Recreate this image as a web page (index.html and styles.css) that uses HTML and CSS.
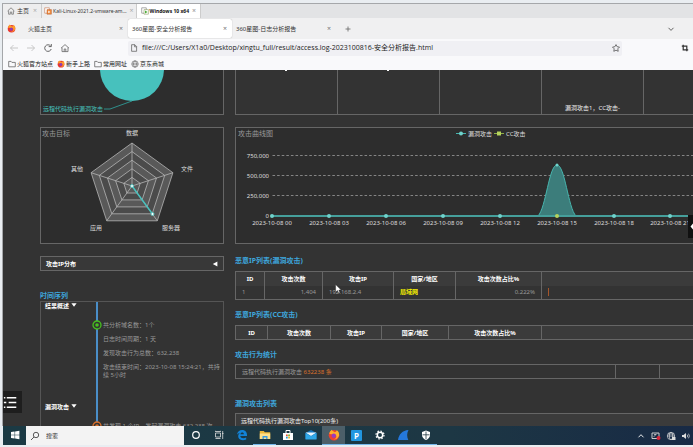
FILE: index.html
```html
<!DOCTYPE html>
<html lang="zh-CN">
<head>
<meta charset="utf-8">
<title>360星图-安全分析报告</title>
<link rel="stylesheet" href="styles.css">
</head>
<body>
<div class="window">
  <nav class="vm-tabs" aria-label="虚拟机">
    <button class="vm-tab vm-home"><svg class="icon-s" viewBox="0 0 8 8"><path d="M.6 4 4 .8 7.4 4M1.6 3.6v3.6h1.7V5h1.4v2.2h1.7V3.6" fill="none" stroke="#777" stroke-width=".8"/></svg>主页<span class="close">×</span></button>
    <button class="vm-tab"><svg class="icon-s" viewBox="0 0 8 8"><path d="M.7.8h4.6v5.4H.7z" fill="#fff" stroke="#c98a6a" stroke-width=".7"/><path d="M3 2.6h4.4v4.6H3z" fill="#f08a3c" stroke="#b85a28" stroke-width=".5"/><path d="m4.3 3.6 2 1.3-2 1.3z" fill="#fff"/></svg>Kali-Linux-2021.2-vmware-am...<span class="close">×</span></button>
    <button class="vm-tab vm-current"><svg class="icon-s" viewBox="0 0 8 8"><path d="M.7.8h4.6v5.4H.7z" fill="#fff" stroke="#888" stroke-width=".7"/><path d="M3 2.6h4.4v4.6H3z" fill="#fff" stroke="#7a8a4a" stroke-width=".5"/><path d="m4 3.4 2.6 1.5L4 6.4z" fill="#4fae3c"/></svg>Windows 10 x64<span class="close">×</span></button>
  </nav>

  <nav class="tabs" aria-label="标签页">
    <button class="tab"><svg class="fox" viewBox="0 0 10 10"><circle cx="5" cy="5.2" r="4.2" fill="#e8382f"/><path d="M1.2 4.2C1 2 2.6 1.4 3 .6c.6 1.2 2 1.3 2.6 2.1C7 2.4 7.4 1.4 7.2.8c1.8 1.3 2.4 3.2 1.9 5C8 8 6 9 4.4 8.7 7 8.3 7.6 6 6.4 4.7z" fill="#ff9a2b"/><circle cx="4.8" cy="5.6" r="1.8" fill="#8e3bb5"/></svg><span class="tab-name">火狐主页</span><span class="close">×</span></button>
    <button class="tab tab-current"><span class="tab-name">360星图-安全分析报告</span><span class="close">×</span></button>
    <button class="tab"><span class="tab-name">360星图-日志分析报告</span><span class="close">×</span></button>
    <button class="tab-new" aria-label="新标签"><svg class="icon-s" viewBox="0 0 8 8"><path d="M4 1.5v5M1.5 4h5" stroke="#666" stroke-width=".8"/></svg></button>
    <button class="tab-list" aria-label="标签列表"><svg class="icon-s" viewBox="0 0 8 8"><path d="m1.5 2.8 2.5 2.6 2.5-2.6" fill="none" stroke="#555" stroke-width=".9"/></svg></button>
  </nav>

  <div class="toolbar">
    <button aria-label="后退"><svg class="icon" viewBox="0 0 10 10"><path d="M9 5H1.5M4.5 2l-3 3 3 3" fill="none" stroke="#bbb" stroke-width=".8"/></svg></button>
    <button aria-label="前进"><svg class="icon" viewBox="0 0 10 10"><path d="M1 5h7.5M5.5 2l3 3-3 3" fill="none" stroke="#bbb" stroke-width=".8"/></svg></button>
    <button aria-label="刷新"><svg class="icon" viewBox="0 0 10 10"><path d="M8.2 6A3.3 3.3 0 1 1 7.6 3M8.3 1v2.6H5.7" fill="none" stroke="#555" stroke-width=".9"/></svg></button>
    <button aria-label="主页"><svg class="icon" viewBox="0 0 10 10"><path d="M1 5.2 5 1.6l4 3.6M2 4.6v4h6v-4M4.2 8.6V6h1.6v2.6" fill="none" stroke="#666" stroke-width=".8"/></svg></button>
    <label class="address"><svg class="icon-s" viewBox="0 0 8 8"><path d="M1.6.7h3.2l1.8 1.8v4.8h-5zM4.6.8v2h2" fill="none" stroke="#555" stroke-width=".7"/></svg><input type="text" aria-label="地址" value="file:///C:/Users/X1a0/Desktop/xingtu_full/result/access.log-2023100816-安全分析报告.html"><svg class="icon-s" viewBox="0 0 8 8"><path d="m4 .6 1.1 2.1 2.4.4-1.7 1.7.4 2.5L4 6.2 1.8 7.3l.4-2.5L.5 3.1l2.4-.4z" fill="none" stroke="#555" stroke-width=".8"/></svg></label>
    <button class="crop" aria-label="截图"><svg class="icon-s" viewBox="0 0 8 8"><path d="M2.2.8v5h5M.8 2.2h5v5" fill="none" stroke="#333" stroke-width="1.2"/></svg></button>
  </div>

  <nav class="bookmarks" aria-label="书签">
    <a href="#"><svg class="icon-s" viewBox="0 0 8 8"><path d="M.7 1.4h2.4l.8 1h3.4v4.4H.7z" fill="none" stroke="#555" stroke-width=".7"/></svg>火狐官方站点</a>
    <a href="#"><svg class="icon-s" viewBox="0 0 10 10"><circle cx="5" cy="5.2" r="4.2" fill="#e8382f"/><path d="M1.2 4.2C1 2 2.6 1.4 3 .6c.6 1.2 2 1.3 2.6 2.1C7 2.4 7.4 1.4 7.2.8c1.8 1.3 2.4 3.2 1.9 5C8 8 6 9 4.4 8.7 7 8.3 7.6 6 6.4 4.7z" fill="#ff9a2b"/><circle cx="4.8" cy="5.6" r="1.8" fill="#8e3bb5"/></svg>新手上路</a>
    <a href="#"><svg class="icon-s" viewBox="0 0 8 8"><path d="M.7 1.4h2.4l.8 1h3.4v4.4H.7z" fill="none" stroke="#555" stroke-width=".7"/></svg>常用网址</a>
    <a href="#"><svg class="icon-s" viewBox="0 0 8 8"><g fill="none" stroke="#555" stroke-width=".6"><circle cx="4" cy="4" r="3.2"/><ellipse cx="4" cy="4" rx="1.4" ry="3.2"/><path d="M.8 4h6.4"/></g></svg>京东商城</a>
  </nav>

  <main class="report">
    <div class="side">
      <section class="panel pie">
        <svg class="chart" height="44"><circle cx="91" cy="-1" r="32" fill="#47c1bd"/><path d="M91 31 69 39h-6" fill="none" stroke="#2f8f8b"/><text x="2" y="41" class="teal">远程代码执行漏洞攻击</text></svg>
      </section>
      <section class="panel">
        <svg class="chart" height="115">
          <text x="1" y="8" class="caption">攻击目标</text>
          <g transform="translate(91 58)" stroke="#b5b5b5" stroke-width=".8">
            <path d="M0-43 40.9-13.3 25.3 34.8h-50.6L-40.9-13.3z" fill="#595959"/>
            <path d="M0-34.4 32.7-10.6 20.2 27.8h-40.4L-32.7-10.6z" fill="#4b4b4b"/>
            <path d="M0-25.8 24.5-8 15.2 20.9h-30.4L-24.5-8z" fill="#595959"/>
            <path d="M0-17.2 16.4-5.3 10.1 13.9h-20.2L-16.4-5.3z" fill="#4b4b4b"/>
            <path d="M0-8.6 8.2-2.7 5.1 7H-5.1L-8.2-2.7z" fill="#595959"/>
            <path d="M0 0V-43M0 0 40.9-13.3M0 0 25.3 34.8M0 0-25.3 34.8M0 0-40.9-13.3" fill="none"/>
            <path d="m0 0 20.5 28" stroke="#47c1bd" stroke-width="1.4"/>
            <circle r="1.5" fill="#fff" stroke="#47c1bd"/><circle cx="20.5" cy="28" r="1.5" fill="#fff" stroke="#47c1bd"/>
          </g>
          <g class="label mid"><text x="91" y="7">数据</text><text x="146" y="43">文件</text><text x="130" y="102">服务器</text><text x="55" y="102">应用</text><text x="36" y="43">其他</text></g>
        </svg>
      </section>
      <button class="fold"><span>攻击IP分布</span><svg class="arrow" viewBox="0 0 6 6"><path d="M5.4.6v4.8L.8 3z" fill="#fff"/></svg></button>
      <h2 class="time-title">时间序列</h2>
      <div class="timeline">
        <section class="stage">
          <h3>结果概述 <svg class="arrow" viewBox="0 0 6 6"><path d="M.4 1.2h5.2L3 4.8z" fill="#fff"/></svg></h3>
          <ul>
            <li class="mark"><svg class="dot" viewBox="0 0 10 10"><circle cx="5" cy="5" r="4" fill="#333" stroke="#46c01e" stroke-width="1.3"/><circle cx="5" cy="5" r="1.8" fill="#46c01e"/></svg>共分析域名数：1个</li>
            <li>日志时间周期：1 天</li>
            <li>发现攻击行为总数：632,238</li>
            <li>攻击结束时间：2023-10-08 15:24:21，共持续 5小时</li>
          </ul>
        </section>
        <section class="stage">
          <h3>漏洞攻击 <svg class="arrow" viewBox="0 0 6 6"><path d="M.4 1.2h5.2L3 4.8z" fill="#fff"/></svg></h3>
          <ul>
            <li class="mark"><svg class="dot" viewBox="0 0 10 10"><circle cx="5" cy="5" r="4" fill="#333" stroke="#d9702c" stroke-width="1.3"/><circle cx="5" cy="5" r="1.8" fill="#d9702c"/></svg>共发现 1 个IP，发起漏洞攻击 632,238 次</li>
          </ul>
        </section>
      </div>
    </div>

    <div class="body">
      <div class="cards"><div class="card tick"></div><div class="card tick"></div><div class="card"></div><div class="card">漏洞攻击1，CC攻击-</div><div class="card"></div></div>
      <section class="panel">
        <svg class="chart" height="115">
          <text x="2" y="8" class="caption">攻击曲线图</text>
          <path d="M36.5 27.5H470M36.5 47.5H470M36.5 67.5H470" stroke="#858585" stroke-dasharray="2.6 2" fill="none"/>
          <path d="M302 88c8-8 11-51 19-51s11 43 19 51z" fill="#3c7d7b" stroke="#47b5ae"/>
          <path d="M36 88H470" stroke="#459f9b" stroke-width="2"/>
          <g fill="#6fd3cc"><circle cx="36" cy="88" r="2"/><circle cx="93" cy="88" r="2"/><circle cx="150" cy="88" r="2"/><circle cx="207" cy="88" r="2"/><circle cx="264" cy="88" r="2"/><circle cx="321" cy="37" r="1.5"/><circle cx="378" cy="88" r="2"/><circle cx="434" cy="88" r="2"/></g>
          <circle cx="321" cy="88" r="2" fill="#b5d35c"/>
          <g class="label end"><text x="33" y="30">750,000</text><text x="33" y="50">500,000</text><text x="33" y="70">250,000</text><text x="33" y="90">0</text></g>
          <g class="label mid"><text x="36" y="97">2023-10-08 00</text><text x="93" y="97">2023-10-08 03</text><text x="150" y="97">2023-10-08 06</text><text x="207" y="97">2023-10-08 09</text><text x="264" y="97">2023-10-08 12</text><text x="321" y="97">2023-10-08 15</text><text x="378" y="97">2023-10-08 18</text><text x="434" y="97">2023-10-08 21</text></g>
          <path d="M220 5.5h10" stroke="#47b5ae"/><circle cx="225" cy="5.5" r="2" fill="#6fd3cc"/>
          <path d="M258 5.5h10" stroke="#8fae45"/><path d="M261 3.5h4v4h-4z" fill="#b5d35c"/>
          <g class="label"><text x="232" y="8">漏洞攻击</text><text x="270" y="8">CC攻击</text></g>
        </svg>
      </section>

      <h2>恶意IP列表(漏洞攻击)</h2>
      <table class="ip-table">
        <colgroup><col class="w29"><col class="w58"><col class="w71"><col class="w62"><col class="w86"><col></colgroup>
        <thead><tr><th>ID</th><th>攻击次数</th><th>攻击IP</th><th>国家/地区</th><th>攻击次数占比%</th><th></th></tr></thead>
        <tbody><tr><td>1</td><td class="num">1,404</td><td>192.168.2.4</td><td class="local">局域网</td><td class="num">0.222%</td><td><span class="bar"></span></td></tr></tbody>
      </table>

      <h2>恶意IP列表(CC攻击)</h2>
      <table class="ip-table">
        <colgroup><col class="w32"><col class="w63"><col class="w51"><col class="w67"><col class="w93"><col></colgroup>
        <thead><tr><th>ID</th><th>攻击次数</th><th>攻击IP</th><th>国家/地区</th><th>攻击次数占比%</th><th></th></tr></thead>
      </table>

      <h2>攻击行为统计</h2>
      <table class="ip-table stats">
        <colgroup><col><col class="w44"><col class="w34"></colgroup>
        <tbody><tr><td>远程代码执行漏洞攻击 <b>632238 条</b></td><td></td><td></td></tr></tbody>
      </table>

      <h2>漏洞攻击列表</h2>
      <div class="list-head">远程代码执行漏洞攻击Top10(200条)</div>
    </div>

    <button class="menu" aria-label="目录"><svg viewBox="0 0 21 21"><path d="M5 6h10M7 11h8M5 16h10" stroke="#fff" stroke-width="1.4"/><path d="M2 6h1.5M2 11h2.5M2 16h1.5" stroke="#fff" stroke-width="1.4"/></svg></button>
    <button class="drawer" aria-label="展开"><svg viewBox="0 0 5 23"><path d="M5 8.5v6L2.5 11.5z" fill="#fff"/></svg></button>
    <svg class="cursor" viewBox="0 0 7 10"><path d="M.6.5v7.6l1.9-1.6 1.2 2.7 1.2-.6-1.1-2.5h2.4z" fill="#fff" stroke="#222" stroke-width=".4"/></svg>
  </main>

  <footer class="taskbar">
    <button class="slot" aria-label="开始"><svg class="app" viewBox="0 0 12 12"><path d="m2 3 3.6-.5v3.2H2zM6.1 2.4 10.4 1.8v3.9H6.1zM2 6.2h3.6v3.3L2 9zM6.1 6.2h4.3v4L6.1 9.6z" fill="#fff"/></svg></button>
    <label class="search"><svg class="icon" viewBox="0 0 10 10"><circle cx="6" cy="4" r="2.7" fill="none" stroke="#333" stroke-width=".8"/><path d="M4 6 1 9" stroke="#333" stroke-width=".8"/></svg><input type="text" placeholder="搜索" aria-label="搜索"></label>
    <button class="slot" aria-label="语音助手"><svg class="app" viewBox="0 0 12 12"><circle cx="6" cy="6" r="3.3" fill="none" stroke="#fff" stroke-width="1.2"/></svg></button>
    <button class="slot" aria-label="任务视图"><svg class="app" viewBox="0 0 12 12"><path d="M2.5 4h5v4h-5zM2.5 1.8v1M7.5 1.8v1M2.5 2.5h5M2.5 9.5h5M9.7 2v8M9 4.5h1.5" fill="none" stroke="#ddd" stroke-width=".8"/></svg></button>
    <button class="slot" aria-label="Edge"><svg class="app" viewBox="0 0 12 12"><path d="M1 5.8C1.3 2.8 3.5 1 6.2 1 9.3 1 11 3.3 11 6v1H4.3c.1 2.3 3.5 2.8 5.9 1.4v2C6.6 12 2.3 11 2.2 7.3 2.2 5.6 3 4.5 4.3 3.8 2.9 4 1.7 4.7 1 5.8zM4.4 5.2h3.5C7.9 3 4.7 3 4.4 5.2z" fill="#1283d8"/></svg></button>
    <button class="slot open" aria-label="文件"><svg class="app" viewBox="0 0 12 12"><path d="M.8 2h4l1 1.2h5.4V10H.8z" fill="#f0b93a"/><path d="M.8 4.5h10.4V10H.8z" fill="#ffe08a"/><path d="M3.5 7h5v3H7.2V8.5H4.8V10H3.5z" fill="#3a9be0"/></svg></button>
    <button class="slot" aria-label="商店"><svg class="app" viewBox="0 0 12 12"><path d="M1 4h10v7H1z" fill="#fff"/><path d="M4 4V1.5h4V4" fill="none" stroke="#fff"/><path d="M4 5.5h1.7v1.7H4z" fill="#e8502c"/><path d="M6.2 5.5h1.7v1.7H6.2z" fill="#71b52c"/><path d="M4 7.7h1.7v1.7H4z" fill="#20a0dc"/><path d="M6.2 7.7h1.7v1.7H6.2z" fill="#f1b51d"/></svg></button>
    <button class="slot" aria-label="邮件"><svg class="app" viewBox="0 0 12 12"><path d="M.5 4 6 1l5.5 3v6H.5z" fill="#1575bd"/><path d="M.5 3.5h11L6 7z" fill="#e8f5ff"/><path d="M.5 4 6 7.3 11.5 4v6.5H.5z" fill="#2fa7e8"/></svg></button>
    <button class="slot open current" aria-label="Firefox"><svg class="app" viewBox="0 0 10 10"><circle cx="5" cy="5.2" r="4.4" fill="#f0402f"/><path d="M1.2 4.2C1 2 2.6 1.4 3 .6c.6 1.2 2 1.3 2.6 2.1C7 2.4 7.4 1.4 7.2.8c1.8 1.3 2.4 3.2 1.9 5C8 8 6 9 4.4 8.7 7 8.3 7.6 6 6.4 4.7z" fill="#ffb02b"/><circle cx="4.8" cy="5.6" r="1.8" fill="#9a3bc0"/></svg></button>
    <button class="slot open"><span class="p-icon">P</span></button>
    <button class="slot open" aria-label="设置"><svg class="app" viewBox="0 0 12 12"><circle cx="6" cy="6" r="2.7" fill="none" stroke="#fff" stroke-width="1.5"/><circle cx="6" cy="6" r="4" fill="none" stroke="#fff" stroke-width="1.2" stroke-dasharray="1.57 1.57"/></svg></button>
    <button class="slot open" aria-label="抓包"><svg class="app" viewBox="0 0 12 12"><path d="M1 11C2 5 5.5 1.5 11.5 1c-1.8 3-1.7 7-.2 10z" fill="#2478dc"/></svg></button>
    <button class="slot open" aria-label="安全"><svg class="app" viewBox="0 0 12 12"><path d="M6 1.5 10 3v3c0 2.5-1.8 4-4 5-2.2-1-4-2.5-4-5V3z" fill="#fff"/><path d="M6 2.5v7.5M2.5 5.8h7" stroke="#223843" stroke-width=".8"/></svg></button>
    <div class="tray">
      <svg class="icon" viewBox="0 0 10 10"><path d="m2.5 6.3 2.5-2.6 2.5 2.6" fill="none" stroke="#fff" stroke-width=".9"/></svg>
      <svg class="icon" viewBox="0 0 10 10"><path d="M1 2h7v5.5H1z" fill="none" stroke="#ddd" stroke-width=".9"/><path d="M2.5 6 6 2.5M3 3.5h2" stroke="#ddd" stroke-width=".7"/><circle cx="7.5" cy="7" r="2" fill="#d8253a"/></svg>
      <svg class="icon" viewBox="0 0 10 10"><g fill="none" stroke="#ddd" stroke-width=".7"><circle cx="5" cy="5" r="3.7"/><ellipse cx="5" cy="5" rx="1.7" ry="3.7"/><path d="M1.3 5h7.4M2 3h6"/></g><path d="M6 6h3.5v3H6z" fill="#ddd"/></svg>
      <svg class="icon" viewBox="0 0 10 10"><path d="M1 4h1.5L5 2v6L2.5 6H1z" fill="#ddd"/><path d="M6.2 3.7q1 1.3 0 2.6M7.5 2.7q1.8 2.3 0 4.6" fill="none" stroke="#ddd" stroke-width=".7"/></svg>
    </div>
  </footer>
</div>
</body>
</html>
```
FILE: styles.css
```css
* { box-sizing: border-box; }

body {
  margin: 0;
  font: 6px/8px "Noto Sans", "Noto Sans CJK SC", sans-serif;
  color: #333;
  background: #e9edf1;
}

button, input {
  margin: 0;
  padding: 0;
  border: 0;
  background: none;
  font: inherit;
  color: inherit;
}

h2, h3, ul { margin: 0; padding: 0; }
svg { display: block; flex: none; }

.window {
  display: flex;
  flex-direction: column;
  height: 100vh;
  padding: 3px 0 2px 2px;
  overflow: hidden;
}

.icon-s { width: 8px; height: 8px; }
.icon { width: 10px; height: 10px; }
.close { color: #777; font-size: 7px; }

/* Virtual machine tabs */
.vm-tabs {
  display: flex;
  flex: none;
  height: 15px;
  border-top: 1px solid #a5a7aa;
  border-left: 1px solid #a5a7aa;
  background: #e2e3e5;
  font-size: 5px;
}

.vm-tab {
  display: flex;
  align-items: center;
  gap: 1px;
  padding: 0 2px;
  border-right: 1px solid #ccc;
  background: #ededee;
}

.vm-home { gap: 2px; padding: 0 4px; font-size: 6px; }
.vm-tab .close { margin-left: 2px; color: #aaa; }
.vm-current { padding: 0 4px; background: #fff; font-weight: bold; color: #111; }

/* Browser chrome */
.tabs, .toolbar, .bookmarks {
  display: flex;
  align-items: center;
  flex: none;
  border-left: 1px solid #a5a7aa;
}

.tabs { height: 21px; background: #f0f0f1; }

.tab {
  display: flex;
  align-items: center;
  flex: 0 1 104px;
  height: 19px;
  padding: 0 5px 0 4px;
  text-align: left;
}

.tab:first-child { flex-basis: 125px; }
.tab-current { border-radius: 2px; background: #fff; box-shadow: 0 0 1px #999; }
.tab-name { flex: 1; }
.fox { width: 9px; height: 9px; margin-right: 12px; }
.tab-new { margin-left: 8px; }
.tab-list { margin: 0 18px 0 auto; }

.toolbar { gap: 7px; height: 18px; padding: 0 4px 0 6px; background: #f9f9fb; }

.address {
  display: flex;
  align-items: center;
  flex: 0 1 494px;
  gap: 4px;
  height: 15px;
  margin-left: 51px;
  padding: 0 2px;
  border-radius: 2px;
  background: #f0f0f4;
}

.address input {
  flex: 1;
  min-width: 0;
  color: #222;
  font: 7px/10px "Open Sans", "Noto Sans CJK SC", sans-serif;
}

.crop { margin-left: auto; }
.bookmarks { gap: 4px; height: 13px; padding-left: 5px; background: #f9f9fb; }
.bookmarks a { display: flex; align-items: center; gap: 1px; color: #222; text-decoration: none; }

/* Report page */
.report {
  position: relative;
  display: grid;
  grid-template-columns: 184px minmax(0, 1fr);
  align-items: start;
  gap: 11px;
  flex: 1;
  min-height: 0;
  padding-left: 37px;
  border-left: 1px solid #a5a7aa;
  overflow: hidden;
  background: #333;
  color: #999;
}

.panel {
  height: 117px;
  border: 1px solid #666;
  background: #2d2d2d;
}

.body .panel { border-right: 0; }
.panel.pie { height: 45px; margin-bottom: 12px; border-top: 0; }
.chart { width: 100%; overflow: hidden; }
.caption { fill: #999; font-size: 7px; }
.teal { fill: #47c1bd; }
.label { fill: #ddd; }
.mid { text-anchor: middle; }
.end { text-anchor: end; }

.fold {
  display: flex;
  align-items: center;
  justify-content: space-between;
  width: 100%;
  height: 15px;
  margin-top: 12px;
  padding: 0 5px;
  border: 1px solid #666;
  background: #383838;
  color: #fff;
  font-weight: bold;
}

.arrow { display: inline-block; width: 6px; height: 6px; }

h2 { color: #3ea6dc; font-size: 7px; line-height: 10px; }
.time-title { margin-top: 20px; }
.timeline { border: 1px solid #555; }
.stage { display: grid; grid-template-columns: 55px 1fr; min-height: 101px; }
.stage h3 { padding-left: 4px; color: #fff; font-size: 6px; line-height: 8px; }

.stage ul {
  display: flex;
  flex-direction: column;
  gap: 6px;
  padding: 19px 0 0 5px;
  border-left: 2px solid #4a8ec8;
  list-style: none;
}

.mark { position: relative; }
.dot { position: absolute; left: -11px; top: -1px; width: 10px; height: 10px; }

.cards {
  display: flex;
  height: 45px;
  margin-bottom: 12px;
  border-bottom: 1px solid #666;
  overflow: hidden;
}

.card {
  position: relative;
  display: flex;
  align-items: flex-end;
  justify-content: center;
  flex: 0 0 102px;
  padding-bottom: 2px;
  border-left: 1px solid #666;
  color: #eee;
}

.tick::before {
  content: "";
  position: absolute;
  top: 0;
  left: 49px;
  width: 2px;
  height: 1px;
  background: #fff;
}

.body h2 { margin-top: 14px; }
.body .panel + h2 { margin-top: 12px; }

.ip-table {
  width: 100%;
  margin-top: 5px;
  border: 1px solid #666;
  border-right: 0;
  border-collapse: collapse;
  table-layout: fixed;
}

.ip-table th { background: #3b3b3b; color: #fff; }
.ip-table th, .ip-table td { height: 14px; padding: 0 6px; border-left: 1px solid #666; }
.ip-table + h2 { margin-top: 10px; }
.ip-table .num { text-align: right; }
.ip-table .local { color: #f5f000; font-weight: bold; }
.ip-table b { color: #d9702c; font-weight: normal; }
.stats { margin-top: 4px; }
.body .stats + h2 { margin-top: 20px; }

.w29 { width: 29px; }
.w58 { width: 58px; }
.w71 { width: 71px; }
.w62 { width: 62px; }
.w86 { width: 86px; }
.w32 { width: 32px; }
.w63 { width: 63px; }
.w51 { width: 51px; }
.w67 { width: 67px; }
.w93 { width: 93px; }
.w44 { width: 44px; }
.w34 { width: 34px; }

.bar { display: block; width: 1px; height: 8px; background: #a5562a; }

.list-head {
  height: 20px;
  margin-top: 4px;
  padding: 3px 5px;
  border: 1px solid #666;
  border-right: 0;
  background: #3b3b3b;
  color: #eee;
}

/* Overlays above the page */
.menu, .drawer, .cursor { position: absolute; }
.menu { left: -1px; bottom: 13px; width: 20px; height: 22px; background: #1e1e1e; }
.drawer { right: 0; top: 145px; width: 5px; height: 23px; background: #111; }
.cursor { left: 332px; top: 214px; width: 7px; height: 10px; }

/* Taskbar */
.taskbar {
  display: flex;
  align-items: stretch;
  flex: none;
  height: 19px;
  margin-left: 1px;
  background: linear-gradient(90deg, #1b3a44, #1d3744 65%, #182a45);
}

.slot { display: grid; place-items: center; flex: none; width: 23px; border-bottom: 1px solid transparent; }
.open { border-bottom-color: #76b9ed; }
.current { background: #4c5f69; }
.app { width: 12px; height: 12px; }

.p-icon {
  width: 11px;
  border-radius: 1px;
  background: #2196e0;
  color: #fff;
  font: bold 8px/11px "Noto Sans", sans-serif;
}

.search { display: flex; align-items: center; flex: 0 1 158px; gap: 6px; padding-left: 4px; background: #f3f3f3; }
.search input { flex: 1; min-width: 0; }
.search input::placeholder { color: #333; opacity: 1; }
.tray { display: flex; align-items: center; gap: 5px; margin-left: auto; padding-right: 2px; }
```
